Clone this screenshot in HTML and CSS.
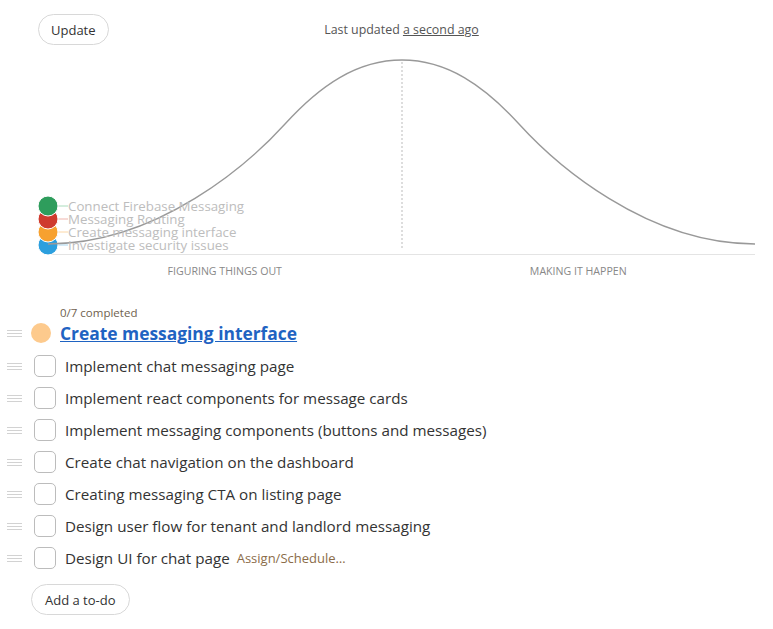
FILE: index.html
```html
<!DOCTYPE html>
<html>
<head>
<meta name="viewport" content="width=device-width, initial-scale=1">
<link rel="stylesheet" href="styles.css">
</head>
<body>
<div class="hill">
  <div class="hill-top">
    <button class="pill">Update</button>
    <p class="stamp">Last updated <a href="#">a second ago</a></p>
    <span></span>
  </div>

  <svg class="chart" width="743" height="215" viewBox="30 45 743 215">
    <line class="base" x1="48" y1="254.5" x2="755" y2="254.5"/>
    <line class="mid" x1="402" y1="62" x2="402" y2="250"/>

    <line x1="56" y1="245" x2="68" y2="245" stroke="#a9d6ef"/>
    <line x1="56" y1="232" x2="68" y2="232" stroke="#fcd7a6"/>
    <line x1="56" y1="219" x2="68" y2="219" stroke="#efb5ad"/>
    <line x1="56" y1="206" x2="68" y2="206" stroke="#a9dcbc"/>

    <circle class="dot" cx="48" cy="245" r="10" fill="#2c9fde"/>
    <circle class="dot" cx="48" cy="232" r="10" fill="#f7a12f"/>
    <circle class="dot" cx="48" cy="219" r="10" fill="#cf3b2e"/>
    <circle class="dot" cx="48" cy="206" r="10" fill="#2e9d5c"/>

    <path class="curve" d="M48,244 C159,244 250,162.5 285,124 C320,85.5 357,60 402,60 C447,60 484,85.5 519,124 C554,162.5 645,244 755,244"/>

    <text class="lbl" x="68" y="210.5">Connect Firebase Messaging</text>
    <text class="lbl" x="68" y="223.5">Messaging Routing</text>
    <text class="lbl" x="68" y="236.5">Create messaging interface</text>
    <text class="lbl" x="68" y="249.5">Investigate security issues</text>
  </svg>

  <div class="phases">
    <span>FIGURING THINGS OUT</span>
    <span>MAKING IT HAPPEN</span>
  </div>
</div>

<div class="list">
  <div class="done">0/7 completed</div>
  <div class="row head">
    <svg class="grip" width="15" height="7"><path d="M0 .5h15M0 3.5h15M0 6.5h15"/></svg>
    <span class="ball"></span>
    <a class="title" href="#">Create messaging interface</a>
  </div>

  <div class="row">
    <svg class="grip" width="15" height="7"><path d="M0 .5h15M0 3.5h15M0 6.5h15"/></svg>
    <span class="box"></span>
    <span class="txt">Implement chat messaging page</span>
  </div>
  <div class="row">
    <svg class="grip" width="15" height="7"><path d="M0 .5h15M0 3.5h15M0 6.5h15"/></svg>
    <span class="box"></span>
    <span class="txt">Implement react components for message cards</span>
  </div>
  <div class="row">
    <svg class="grip" width="15" height="7"><path d="M0 .5h15M0 3.5h15M0 6.5h15"/></svg>
    <span class="box"></span>
    <span class="txt">Implement messaging components (buttons and messages)</span>
  </div>
  <div class="row">
    <svg class="grip" width="15" height="7"><path d="M0 .5h15M0 3.5h15M0 6.5h15"/></svg>
    <span class="box"></span>
    <span class="txt">Create chat navigation on the dashboard</span>
  </div>
  <div class="row">
    <svg class="grip" width="15" height="7"><path d="M0 .5h15M0 3.5h15M0 6.5h15"/></svg>
    <span class="box"></span>
    <span class="txt">Creating messaging CTA on listing page</span>
  </div>
  <div class="row">
    <svg class="grip" width="15" height="7"><path d="M0 .5h15M0 3.5h15M0 6.5h15"/></svg>
    <span class="box"></span>
    <span class="txt">Design user flow for tenant and landlord messaging</span>
  </div>
  <div class="row">
    <svg class="grip" width="15" height="7"><path d="M0 .5h15M0 3.5h15M0 6.5h15"/></svg>
    <span class="box"></span>
    <span class="txt">Design UI for chat page</span>
    <span class="assign">Assign/Schedule…</span>
  </div>

  <button class="pill add">Add a to-do</button>
</div>
</body>
</html>
```

FILE: styles.css
```css
* {box-sizing: border-box;}
body {margin: 0; font-family: "Open Sans", "Noto Sans", sans-serif; color: #333; background: #fff;}
a {color: inherit;}

.pill {
  font-family: inherit;
  font-size: 13px;
  color: #333;
  background: #fff;
  border: 1px solid #d8d8d8;
  border-radius: 16px;
  height: 31px;
  padding: 0 12px;
}

.hill {margin-left: 30px; width: 743px;}

.hill-top {
  display: grid;
  grid-template-columns: 1fr auto 1fr;
  align-items: center;
  padding-top: 14px;
}
.hill-top .pill {justify-self: start; margin-left: 8px;}
.stamp {margin: 0; font-size: 12.4px; color: #555;}

.chart {display: block;}
.base {stroke: #e4e4e4; stroke-width: 1;}
.mid {stroke: #bbb; stroke-width: 1; stroke-dasharray: 2 2;}
.dot {stroke: #fff; stroke-width: 1;}
.curve {fill: none; stroke: #999; stroke-width: 1.4;}
.lbl {font-size: 13.3px; fill: #bdbdbd;}

.phases {
  display: grid;
  grid-template-columns: 1fr 1fr;
  padding: 5px 18px 0;
  font-size: 10.6px;
  line-height: 12px;
  color: #888;
  text-align: center;
}

.list {margin: 29px 0 0 7px;}
.done {padding-left: 53px; font-size: 11.5px; line-height: 14px; color: #6f5f4e;}

.row {display: flex; align-items: center; height: 32px;}
.row.head {height: 30px; padding-bottom: 4px;}
.grip {flex: none; margin-right: 12px;}
.grip path {stroke: #d2d2d2; stroke-width: 1;}
.head .grip {margin-right: 9px;}

.ball {width: 20px; height: 20px; border-radius: 50%; background: #fdca8d; margin-right: 9px;}
.title {font-size: 17.4px; font-weight: bold; color: #1f63c2;}

.box {flex: none; width: 22px; height: 22px; border: 1px solid #bcbcbc; border-radius: 5px; margin-right: 9px;}
.txt {font-size: 15.2px; color: #333;}
.assign {margin-left: 7px; font-size: 13px; color: #8b6c49;}

.add {margin: 10px 0 0 24px; padding: 0 13px;}
```
